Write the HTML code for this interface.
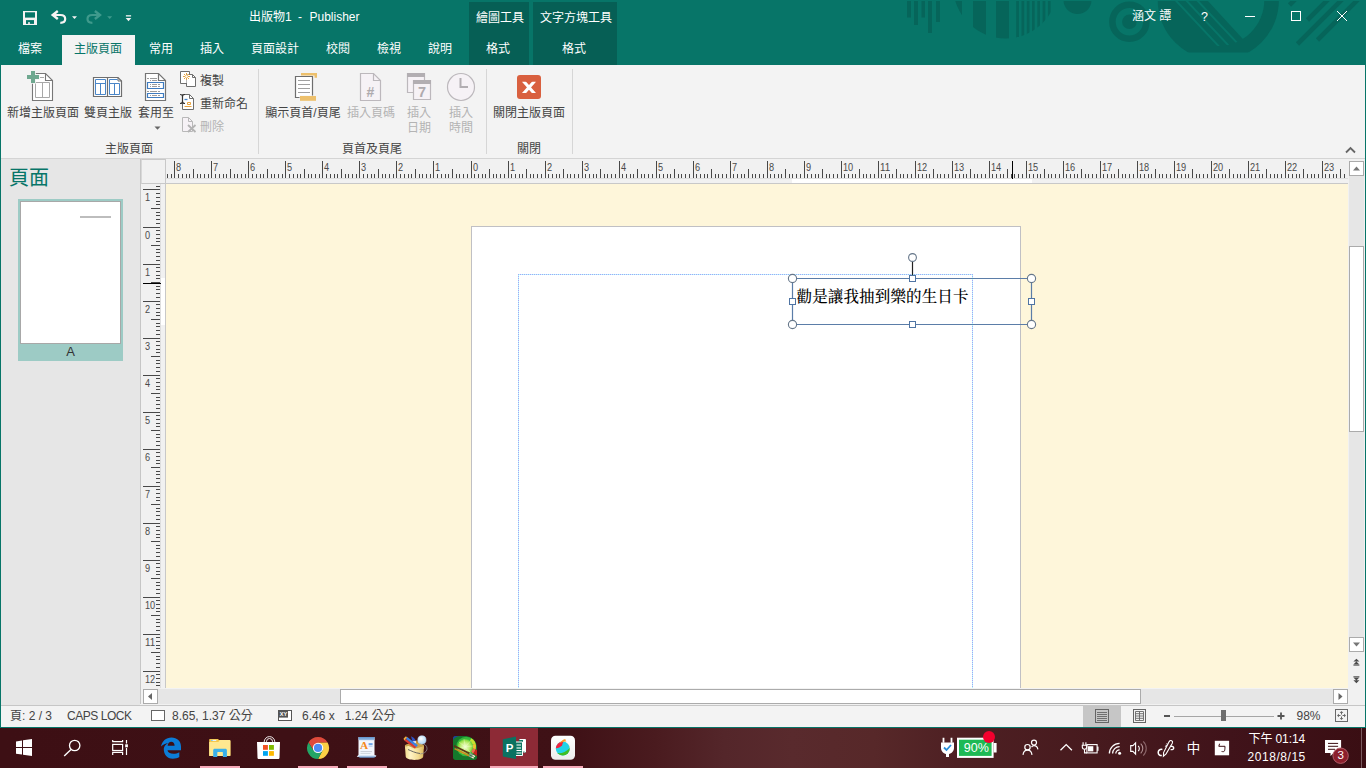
<!DOCTYPE html>
<html lang="zh-Hant">
<head>
<meta charset="utf-8">
<title>出版物1 - Publisher</title>
<style>
*{box-sizing:border-box;margin:0;padding:0}
html,body{width:1366px;height:768px;overflow:hidden;background:#f3f3f3}
body{font-family:"Liberation Sans","Noto Sans CJK TC",sans-serif;font-size:12px;color:#444;position:relative}
.abs{position:absolute}
.t{position:absolute;white-space:nowrap;line-height:16px;height:16px}
.c{transform:translateX(-50%)}
#titlebar{left:0;top:0;width:1366px;height:65px;background:#077568;overflow:hidden}
.w{color:#fff}
.tab{position:absolute;top:41px;height:16px;line-height:16px;color:#fff;font-size:12px;white-space:nowrap}
#ribbon{left:1px;top:65px;width:1364px;height:93px;background:#f3f3f3}
.lbl{position:absolute;white-space:nowrap;line-height:16px;height:16px;font-size:12px;color:#444;transform:translateX(-50%)}
.dis{color:#b4b4b4}
.sep{position:absolute;top:69px;width:1px;height:85px;background:#d6d6d6}
svg{position:absolute;overflow:visible}
</style>
</head>
<body>
<div id="titlebar" class="abs">
<svg width="1366" height="65" viewBox="0 0 1366 65" style="left:0;top:0">
 <g fill="#06655a">
  <rect x="907" y="0" width="4" height="17.5"/><rect x="914" y="0" width="4" height="25"/><rect x="921.5" y="0" width="3.5" height="17.5"/><rect x="928" y="0" width="4" height="33"/><rect x="936" y="0" width="4" height="22"/>
  <clipPath id="cpA"><circle cx="1005.5" cy="-14" r="52.4"/></clipPath>
  <g clip-path="url(#cpA)">
   <path d="M954 0h8v18z"/>
   <rect x="973" y="0" width="13" height="40"/><rect x="996" y="0" width="13" height="40"/>
   <rect x="1016.2" y="0" width="2.7" height="40"/><rect x="1021.5" y="0" width="2.7" height="40"/><rect x="1026.8" y="0" width="2.7" height="40"/><rect x="1032" y="0" width="2.7" height="40"/><rect x="1037.3" y="0" width="2.7" height="40"/><rect x="1042.6" y="0" width="2.7" height="40"/><rect x="1047.9" y="0" width="2.7" height="40"/>
  </g>
  <circle cx="1077.5" cy="0" r="14"/>
 </g>
 <circle cx="1129.4" cy="21.8" r="17" fill="none" stroke="#06655a" stroke-width="6.5"/>
 <circle cx="1129.4" cy="21.8" r="7.3" fill="#06655a"/>
 <clipPath id="cpB"><rect x="1150" y="0" width="140" height="52.500"/></clipPath>
 <g clip-path="url(#cpB)">
  <circle cx="1218.300" cy="0" r="60.600" fill="#06655a"/>
  <clipPath id="cpC"><circle cx="1218.300" cy="0" r="46"/></clipPath>
  <g clip-path="url(#cpC)">
   <path d="M1207 0L1253 50H1300V-10H1198z" fill="#077568"/>
   <path d="M1166 -10L1226 54M1176.500 -10L1236.500 54M1187.500 -10L1247.500 54" stroke="#077568" stroke-width="2" fill="none"/>
  </g>
 </g>
 <g stroke="#06655a" stroke-width="4.600" fill="none">
  <path d="M1289.500 5L1297.500 -3M1307.500 20L1330.500 -3M1297.500 44L1344.500 -3M1317.500 40L1361.500 -4"/>
 </g>
 <rect x="0" y="0" width="1366" height="1" fill="#077568"/>
</svg>
<div class="abs" style="left:469px;top:2px;width:60px;height:63px;background:#065f55"></div>
<div class="abs" style="left:533px;top:2px;width:84px;height:63px;background:#065f55"></div>
<div class="abs" style="left:62px;top:35px;width:73px;height:30px;background:#f3f3f3"></div>
<!-- quick access icons -->
<svg width="140" height="32" viewBox="0 0 140 32" style="left:0;top:0">
 <rect x="23" y="11" width="14" height="14" fill="#f6f3f3"/>
 <rect x="25" y="12.300" width="10" height="5.300" fill="#077568"/>
 <rect x="26" y="20.100" width="8" height="3.800" fill="#077568"/>
 <rect x="28.100" y="22.200" width="1.800" height="1.700" fill="#f6f3f3"/>
 <g fill="none" stroke="#f6f3f3" stroke-width="2.200">
  <path d="M53 15H60.500C64 15 65.200 17.200 65.200 19C65.200 21.500 63 22.800 60.300 22.800"/>
  <path d="M57.800 11L52.700 15L57.800 19" stroke-width="2.400"/>
 </g>
 <path d="M72 16.200h5l-2.500 2.900z" fill="#f6f3f3"/>
 <g fill="none" stroke="#3f9a8c" stroke-width="2.200">
  <path d="M99.700 15H92.200C88.700 15 87.500 17.200 87.500 19C87.500 21.500 89.700 22.800 92.400 22.800"/>
  <path d="M94.900 11L100 15L94.900 19" stroke-width="2.400"/>
 </g>
 <path d="M107.200 16.200h5l-2.500 2.900z" fill="#3f9a8c"/>
 <rect x="125.900" y="15.200" width="5.200" height="1.300" fill="#f6f3f3"/>
 <path d="M125.700 18.100h5.600l-2.800 3.100z" fill="#f6f3f3"/>
</svg>
<div class="t w" style="left:249px;top:9px">出版物1</div><div class="t w" style="left:298px;top:9px">-</div><div class="t w" style="left:309.500px;top:9px">Publisher</div>
<div class="t w c" style="left:500px;top:10px">繪圖工具</div>
<div class="t w c" style="left:576px;top:10px">文字方塊工具</div>
<div class="tab c" style="left:30px">檔案</div>
<div class="tab c" style="left:98px;color:#077568">主版頁面</div>
<div class="tab c" style="left:161px">常用</div>
<div class="tab c" style="left:212px">插入</div>
<div class="tab c" style="left:275px">頁面設計</div>
<div class="tab c" style="left:338px">校閱</div>
<div class="tab c" style="left:389px">檢視</div>
<div class="tab c" style="left:440px">說明</div>
<div class="tab c" style="left:498px">格式</div>
<div class="tab c" style="left:574px">格式</div>
<div class="t w" style="left:1132px;top:8px;font-size:12px">涵文 譚</div>
<div class="t w c" style="left:1204.500px;top:9px;font-size:12.500px">?</div>
<svg width="140" height="20" viewBox="0 0 140 20" style="left:1226px;top:6px">
 <g fill="none" stroke="#fff" stroke-width="1">
  <path d="M19 10.500h10"/>
  <rect x="65.500" y="5.500" width="9" height="9"/>
  <path d="M111 5l10 10M121 5l-10 10"/>
 </g>
</svg>
</div>
<div id="ribbon" class="abs"></div>
<div class="abs" style="left:1px;top:158px;width:1364px;height:1px;background:#d4d4d4"></div>
<!-- new master page icon -->
<svg width="30" height="34" viewBox="0 0 30 34" style="left:26px;top:69px">
 <path d="M6.500 4.500H19.500L26.500 11.500V31.500H6.500z" fill="#fff" stroke="#777" stroke-width="1.100"/>
 <path d="M19.500 4.500V11.500H26.500" fill="none" stroke="#777" stroke-width="1.100"/>
 <path d="M9.500 13.500h14v15h-14zM16.500 13.500v15" fill="none" stroke="#a8a8a8"/>
 <path d="M14 8.500h4" stroke="#a8a8a8"/>
 <path d="M5 2h4v4h4v4h-4v4h-4v-4h-4v-4h4z" fill="#6fa890" stroke="#f3f3f3" stroke-width="1.600" paint-order="stroke"/>
</svg>
<div class="lbl" style="left:43px;top:105px">新增主版頁面</div>
<!-- two page master icon -->
<svg width="32" height="24" viewBox="0 0 32 24" style="left:92px;top:75px">
 <path d="M1.500 2.500H15.500V21.500H1.500zM15.500 2.500H26L29.500 6V21.500H15.500z" fill="#fff" stroke="#6e6e6e" stroke-width="1.200"/>
 <path d="M26 2.500V6H29.500" fill="none" stroke="#6e6e6e"/>
 <path d="M3.500 4.500h10v15h-10zM3.500 8.500h10M8.500 8.500v11" fill="none" stroke="#4a86c8"/>
 <path d="M17.500 4.500h8M17.500 4.500v15h10v-11h-10M22.500 8.500v11" fill="none" stroke="#4a86c8"/>
</svg>
<div class="lbl" style="left:108px;top:105px">雙頁主版</div>
<!-- apply to icon -->
<svg width="24" height="30" viewBox="0 0 24 30" style="left:144px;top:72px">
 <path d="M1.500 1.500H14.500L21.500 8.500V28.500H1.500z" fill="#fff" stroke="#747474" stroke-width="1.200"/>
 <path d="M14.500 1.500V8.500H21.500" fill="none" stroke="#747474" stroke-width="1.200"/>
 <path d="M3 6.500h2M6 6.500h7M6 8.500h1M8 8.500h5M3 19.500h2M6 19.500h7M14 19.500h2" stroke="#9c9c9c"/>
 <path d="M3.500 10.500h16v6h-16zM3.500 21.500h16v4h-16z" fill="#fff" stroke="#3f7cc0" stroke-width="1.200"/>
 <path d="M6 12.500h1M8 12.500h5M14 12.500h2M6 14.500h1M8 14.500h5M14 14.500h2M6 23.500h1M8 23.500h5M14 23.500h2" stroke="#9c9c9c"/>
</svg>
<div class="lbl" style="left:156px;top:105px">套用至</div>
<svg width="8" height="5" viewBox="0 0 8 5" style="left:154px;top:126px"><path d="M0.500 0.500h6l-3 3.200z" fill="#666"/></svg>
<!-- copy -->
<svg width="18" height="18" viewBox="0 0 18 18" style="left:179px;top:70px">
 <path d="M7.500 13.500H1.500V1.500H10.500V5" fill="#fff" stroke="#6e6e6e"/>
 <path d="M7.500 4.500H13.500L16.500 7.500V16.500H7.500z" fill="#fff" stroke="#6e6e6e"/>
 <path d="M13.500 4.500V7.500H16.500" fill="none" stroke="#6e6e6e"/>
 <rect x="2" y="2" width="8" height="2.500" fill="#fff"/><rect x="2" y="2" width="5.500" height="11" fill="#fff"/>
 <g stroke="#e8a33d" stroke-width="1"><path d="M7.500 3v7M4 6.500h7M5 4l5 5M10 4l-5 5"/></g>
 <circle cx="7.500" cy="6.500" r="1.300" fill="#fff"/>
</svg>
<div class="t" style="left:200px;top:73px">複製</div>
<!-- rename -->
<svg width="18" height="18" viewBox="0 0 18 18" style="left:179px;top:93px">
 <path d="M3.500 1.500H10.500L14.500 5.500V16.500H3.500z" fill="#fff" stroke="#6e6e6e"/>
 <path d="M10.500 1.500V5.500H14.500" fill="none" stroke="#6e6e6e"/>
 <path d="M1 1.500c1.500 0 2.500 .5 2.500 2v5c0 1.500-1 2-2.500 2M6 1.500c-1.500 0-2.500 .5-2.500 2v5c0 1.500 1 2 2.500 2" fill="none" stroke="#333" stroke-width="1.200"/>
 <path d="M5.500 6.500h3" stroke="#4a86c8" stroke-width="1.300"/>
 <path d="M5.500 13.500h7M8.500 9.500h3v2h-3z" fill="none" stroke="#e8a33d"/>
</svg>
<div class="t" style="left:200px;top:96px">重新命名</div>
<!-- delete -->
<svg width="18" height="18" viewBox="0 0 18 18" style="left:180px;top:116px">
 <path d="M2.500 1.500H8.500L12.500 5.500V15.500H2.500z" fill="#f6f2f6" stroke="#b8b8b8"/>
 <path d="M8.500 1.500V5.500H12.500" fill="none" stroke="#b8b8b8"/>
 <path d="M8 9l7.500 7M15.500 9l-7.500 7" stroke="#b3b3b3" stroke-width="1.800"/>
</svg>
<div class="t dis" style="left:200px;top:119px">刪除</div>
<div class="lbl" style="left:129px;top:141px">主版頁面</div>
<div class="sep" style="left:258px"></div>
<!-- header footer -->
<svg width="26" height="30" viewBox="0 0 26 30" style="left:293px;top:72px">
 <path d="M8 1h16v4.700h-2.500V3.500H8z" fill="#edc06c"/>
 <path d="M2.500 4.500h17v21h-17z" fill="#fff" stroke="#6e6e6e" stroke-width="1.200"/>
 <path d="M5 8.500h12M5 12.500h12M5 16.500h12M5 20.500h12" stroke="#a0a0a0"/>
 <rect x="6.500" y="23.500" width="17" height="5.500" fill="#f3f3f3"/>
 <rect x="7" y="24" width="16" height="4.800" fill="#edc06c"/>
</svg>
<div class="lbl" style="left:303px;top:105px">顯示頁首/頁尾</div>
<!-- insert page number -->
<svg width="24" height="30" viewBox="0 0 24 30" style="left:359px;top:72px">
 <path d="M1.500 1.500H14.500L21.500 8.500V28.500H1.500z" fill="#f6f2f6" stroke="#bcb8bc" stroke-width="1.200"/>
 <path d="M14.500 1.500V8.500H21.500" fill="none" stroke="#bcb8bc" stroke-width="1.200"/>
 <text x="11.500" y="24.500" font-family="Liberation Sans,sans-serif" font-weight="bold" font-size="14" fill="#aeaaae" text-anchor="middle">#</text>
</svg>
<div class="lbl dis" style="left:371px;top:105px">插入頁碼</div>
<!-- insert date -->
<svg width="26" height="30" viewBox="0 0 26 30" style="left:406px;top:72px">
 <path d="M1.500 1.500h17v19h-17z" fill="#f6f2f6" stroke="#bcb8bc" stroke-width="1.200"/>
 <rect x="1" y="1" width="18" height="4" fill="#b2aeb2"/>
 <path d="M7.500 8.500h17v19h-17z" fill="#f6f2f6" stroke="#bcb8bc" stroke-width="1.200"/>
 <rect x="7" y="8" width="18" height="4" fill="#b2aeb2"/>
 <text x="16" y="24.500" font-family="Liberation Sans,sans-serif" font-weight="bold" font-size="14.500" fill="#aeaaae" text-anchor="middle">7</text>
</svg>
<div class="lbl dis" style="left:419px;top:105px">插入</div>
<div class="lbl dis" style="left:419px;top:120px">日期</div>
<!-- insert time -->
<svg width="30" height="30" viewBox="0 0 30 30" style="left:446px;top:72px">
 <circle cx="15" cy="15" r="13.500" fill="#f6f2f6" stroke="#bcb8bc" stroke-width="1.200"/>
 <path d="M14.500 6v9h7.500" fill="none" stroke="#b2aeb2" stroke-width="2"/>
</svg>
<div class="lbl dis" style="left:461px;top:105px">插入</div>
<div class="lbl dis" style="left:461px;top:120px">時間</div>
<div class="lbl" style="left:372px;top:141px">頁首及頁尾</div>
<div class="sep" style="left:486px"></div>
<!-- close master -->
<svg width="26" height="26" viewBox="0 0 26 26" style="left:516px;top:74px">
 <rect x="1" y="1" width="24" height="24" rx="3" fill="#d9603f"/>
 <clipPath id="cx"><rect x="4" y="7.700" width="18" height="11.400"/></clipPath>
 <path d="M7.100 6.700l11.800 13.400M18.900 6.700l-11.800 13.400" stroke="#fff" stroke-width="3.100" clip-path="url(#cx)"/>
</svg>
<div class="lbl" style="left:529px;top:105px">關閉主版頁面</div>
<div class="lbl" style="left:529px;top:141px">關閉</div>
<div class="sep" style="left:572px"></div>
<svg width="12" height="8" viewBox="0 0 12 8" style="left:1345px;top:146px"><path d="M1 6.500l4.500-4.500 4.500 4.500" fill="none" stroke="#666" stroke-width="1.800"/></svg>
<!-- left pane -->
<div class="abs" style="left:1px;top:159px;width:139px;height:546px;background:#e6e6e6"></div>
<div class="t" style="left:9px;top:165px;height:26px;line-height:26px;font-size:20px;color:#077568">頁面</div>
<div class="abs" style="left:18px;top:199px;width:105px;height:162px;background:#9dcbc5"></div>
<div class="abs" style="left:20px;top:201px;width:101px;height:143px;background:#fff;border:1px solid #a8a8a8"></div>
<div class="abs" style="left:80px;top:216px;width:31px;height:2px;background:#bdbdbd"></div>
<div class="t c" style="left:70.500px;top:344px;font-size:13px;color:#333">A</div>
<!-- ruler frame -->
<div class="abs" style="left:141px;top:159px;width:1207px;height:25px;background:#f1f1f1"></div>
<div class="abs" style="left:141px;top:184px;width:25px;height:505px;background:#f1f1f1"></div>
<div class="abs" style="left:140px;top:159px;width:1px;height:545px;background:#c6c6c6"></div>
<div class="abs" style="left:141px;top:159px;width:25px;height:25px;border:1px solid #c8c8c8;border-left-color:#d8d8d8"></div>
<div class="abs" style="left:166px;top:178px;width:1182px;height:1px;background:#dedede"></div>
<div class="abs" style="left:166px;top:183px;width:1182px;height:1px;background:#c8c8c8"></div>
<div class="abs" style="left:160px;top:184px;width:1px;height:504px;background:#dedede"></div>
<div class="abs" style="left:165px;top:184px;width:1px;height:504px;background:#c8c8c8"></div>
<div class="abs" style="left:792px;top:179px;width:240px;height:4px;background:#fff"></div>
<div class="abs" style="left:161px;top:278px;width:4px;height:47px;background:#fff"></div>
<!-- rulers -->
<svg width="1366" height="768" viewBox="0 0 1366 768" style="left:0;top:0">
<path d="M167.5 174V178M171.5 174V178M174.5 161V178M178.5 174V178M182.5 174V178M186.5 174V178M189.5 174V178M193.5 169V178M197.5 174V178M200.5 174V178M204.5 174V178M208.5 174V178M211.5 161V178M215.5 174V178M219.5 174V178M223.5 174V178M226.5 174V178M230.5 169V178M234.5 174V178M237.5 174V178M241.5 174V178M245.5 174V178M248.5 161V178M252.5 174V178M256.5 174V178M260.5 174V178M263.5 174V178M267.5 169V178M271.5 174V178M274.5 174V178M278.5 174V178M282.5 174V178M285.5 161V178M289.5 174V178M293.5 174V178M297.5 174V178M300.5 174V178M304.5 169V178M308.5 174V178M311.5 174V178M315.5 174V178M319.5 174V178M322.5 161V178M326.5 174V178M330.5 174V178M334.5 174V178M337.5 174V178M341.5 169V178M345.5 174V178M348.5 174V178M352.5 174V178M356.5 174V178M359.5 161V178M363.5 174V178M367.5 174V178M371.5 174V178M374.5 174V178M378.5 169V178M382.5 174V178M385.5 174V178M389.5 174V178M393.5 174V178M396.5 161V178M400.5 174V178M404.5 174V178M408.5 174V178M411.5 174V178M415.5 169V178M419.5 174V178M422.5 174V178M426.5 174V178M430.5 174V178M433.5 161V178M437.5 174V178M441.5 174V178M445.5 174V178M448.5 174V178M452.5 169V178M456.5 174V178M459.5 174V178M463.5 174V178M467.5 174V178M471.5 161V178M474.5 174V178M478.5 174V178M482.5 174V178M485.5 174V178M489.5 169V178M493.5 174V178M496.5 174V178M500.5 174V178M504.5 174V178M508.5 161V178M511.5 174V178M515.5 174V178M519.5 174V178M522.5 174V178M526.5 169V178M530.5 174V178M533.5 174V178M537.5 174V178M541.5 174V178M545.5 161V178M548.5 174V178M552.5 174V178M556.5 174V178M559.5 174V178M563.5 169V178M567.5 174V178M570.5 174V178M574.5 174V178M578.5 174V178M582.5 161V178M585.5 174V178M589.5 174V178M593.5 174V178M596.5 174V178M600.5 169V178M604.5 174V178M607.5 174V178M611.5 174V178M615.5 174V178M619.5 161V178M622.5 174V178M626.5 174V178M630.5 174V178M633.5 174V178M637.5 169V178M641.5 174V178M644.5 174V178M648.5 174V178M652.5 174V178M656.5 161V178M659.5 174V178M663.5 174V178M667.5 174V178M670.5 174V178M674.5 169V178M678.5 174V178M681.5 174V178M685.5 174V178M689.5 174V178M693.5 161V178M696.5 174V178M700.5 174V178M704.5 174V178M707.5 174V178M711.5 169V178M715.5 174V178M718.5 174V178M722.5 174V178M726.5 174V178M730.5 161V178M733.5 174V178M737.5 174V178M741.5 174V178M744.5 174V178M748.5 169V178M752.5 174V178M755.5 174V178M759.5 174V178M763.5 174V178M767.5 161V178M770.5 174V178M774.5 174V178M778.5 174V178M781.5 174V178M785.5 169V178M789.5 174V178M792.5 174V178M796.5 174V178M800.5 174V178M804.5 161V178M807.5 174V178M811.5 174V178M815.5 174V178M818.5 174V178M822.5 169V178M826.5 174V178M829.5 174V178M833.5 174V178M837.5 174V178M841.5 161V178M844.5 174V178M848.5 174V178M852.5 174V178M855.5 174V178M859.5 169V178M863.5 174V178M866.5 174V178M870.5 174V178M874.5 174V178M878.5 161V178M881.5 174V178M885.5 174V178M889.5 174V178M892.5 174V178M896.5 169V178M900.5 174V178M903.5 174V178M907.5 174V178M911.5 174V178M915.5 161V178M918.5 174V178M922.5 174V178M926.5 174V178M929.5 174V178M933.5 169V178M937.5 174V178M940.5 174V178M944.5 174V178M948.5 174V178M952.5 161V178M955.5 174V178M959.5 174V178M963.5 174V178M966.5 174V178M970.5 169V178M974.5 174V178M977.5 174V178M981.5 174V178M985.5 174V178M989.5 161V178M992.5 174V178M996.5 174V178M1000.5 174V178M1003.5 174V178M1007.5 169V178M1011.5 174V178M1014.5 174V178M1018.5 174V178M1022.5 174V178M1026.5 161V178M1029.5 174V178M1033.5 174V178M1037.5 174V178M1040.5 174V178M1044.5 169V178M1048.5 174V178M1051.5 174V178M1055.5 174V178M1059.5 174V178M1063.5 161V178M1066.5 174V178M1070.5 174V178M1074.5 174V178M1077.5 174V178M1081.5 169V178M1085.5 174V178M1088.5 174V178M1092.5 174V178M1096.5 174V178M1100.5 161V178M1103.5 174V178M1107.5 174V178M1111.5 174V178M1114.5 174V178M1118.5 169V178M1122.5 174V178M1125.5 174V178M1129.5 174V178M1133.5 174V178M1137.5 161V178M1140.5 174V178M1144.5 174V178M1148.5 174V178M1151.5 174V178M1155.5 169V178M1159.5 174V178M1162.5 174V178M1166.5 174V178M1170.5 174V178M1174.5 161V178M1177.5 174V178M1181.5 174V178M1185.5 174V178M1188.5 174V178M1192.5 169V178M1196.5 174V178M1199.5 174V178M1203.5 174V178M1207.5 174V178M1211.5 161V178M1214.5 174V178M1218.5 174V178M1222.5 174V178M1225.5 174V178M1229.5 169V178M1233.5 174V178M1237.5 174V178M1240.5 174V178M1244.5 174V178M1248.5 161V178M1251.5 174V178M1255.5 174V178M1259.5 174V178M1262.5 174V178M1266.5 169V178M1270.5 174V178M1274.5 174V178M1277.5 174V178M1281.5 174V178M1285.5 161V178M1288.5 174V178M1292.5 174V178M1296.5 174V178M1299.5 174V178M1303.5 169V178M1307.5 174V178M1311.5 174V178M1314.5 174V178M1318.5 174V178M1322.5 161V178M1325.5 174V178M1329.5 174V178M1333.5 174V178M1336.5 174V178M1340.5 169V178M1344.5 174V178" stroke="#484848" stroke-width="1" fill="none"/>
<g font-family="Liberation Sans,sans-serif" font-size="10" fill="#4a4a4a">
<text x="176" y="171" textLength="5.1" lengthAdjust="spacingAndGlyphs">8</text>
<text x="213" y="171" textLength="5.1" lengthAdjust="spacingAndGlyphs">7</text>
<text x="250" y="171" textLength="5.1" lengthAdjust="spacingAndGlyphs">6</text>
<text x="287" y="171" textLength="5.1" lengthAdjust="spacingAndGlyphs">5</text>
<text x="324" y="171" textLength="5.1" lengthAdjust="spacingAndGlyphs">4</text>
<text x="361" y="171" textLength="5.1" lengthAdjust="spacingAndGlyphs">3</text>
<text x="398" y="171" textLength="5.1" lengthAdjust="spacingAndGlyphs">2</text>
<text x="435" y="171" textLength="5.1" lengthAdjust="spacingAndGlyphs">1</text>
<text x="473" y="171" textLength="5.1" lengthAdjust="spacingAndGlyphs">0</text>
<text x="510" y="171" textLength="5.1" lengthAdjust="spacingAndGlyphs">1</text>
<text x="547" y="171" textLength="5.1" lengthAdjust="spacingAndGlyphs">2</text>
<text x="584" y="171" textLength="5.1" lengthAdjust="spacingAndGlyphs">3</text>
<text x="621" y="171" textLength="5.1" lengthAdjust="spacingAndGlyphs">4</text>
<text x="658" y="171" textLength="5.1" lengthAdjust="spacingAndGlyphs">5</text>
<text x="695" y="171" textLength="5.1" lengthAdjust="spacingAndGlyphs">6</text>
<text x="732" y="171" textLength="5.1" lengthAdjust="spacingAndGlyphs">7</text>
<text x="769" y="171" textLength="5.1" lengthAdjust="spacingAndGlyphs">8</text>
<text x="806" y="171" textLength="5.1" lengthAdjust="spacingAndGlyphs">9</text>
<text x="843" y="171" textLength="10.2" lengthAdjust="spacingAndGlyphs">10</text>
<text x="880" y="171" textLength="10.2" lengthAdjust="spacingAndGlyphs">11</text>
<text x="917" y="171" textLength="10.2" lengthAdjust="spacingAndGlyphs">12</text>
<text x="954" y="171" textLength="10.2" lengthAdjust="spacingAndGlyphs">13</text>
<text x="991" y="171" textLength="10.2" lengthAdjust="spacingAndGlyphs">14</text>
<text x="1028" y="171" textLength="10.2" lengthAdjust="spacingAndGlyphs">15</text>
<text x="1065" y="171" textLength="10.2" lengthAdjust="spacingAndGlyphs">16</text>
<text x="1102" y="171" textLength="10.2" lengthAdjust="spacingAndGlyphs">17</text>
<text x="1139" y="171" textLength="10.2" lengthAdjust="spacingAndGlyphs">18</text>
<text x="1176" y="171" textLength="10.2" lengthAdjust="spacingAndGlyphs">19</text>
<text x="1213" y="171" textLength="10.2" lengthAdjust="spacingAndGlyphs">20</text>
<text x="1250" y="171" textLength="10.2" lengthAdjust="spacingAndGlyphs">21</text>
<text x="1287" y="171" textLength="10.2" lengthAdjust="spacingAndGlyphs">22</text>
<text x="1324" y="171" textLength="10.2" lengthAdjust="spacingAndGlyphs">23</text>
</g>
<path d="M156 186.5H160M143 189.5H160M156 193.5H160M156 197.5H160M156 201.5H160M156 204.5H160M151 208.5H160M156 212.5H160M156 215.5H160M156 219.5H160M156 223.5H160M143 227.5H160M156 230.5H160M156 234.5H160M156 238.5H160M156 241.5H160M151 245.5H160M156 249.5H160M156 252.5H160M156 256.5H160M156 260.5H160M143 264.5H160M156 267.5H160M156 271.5H160M156 275.5H160M156 278.5H160M151 282.5H160M156 286.5H160M156 289.5H160M156 293.5H160M156 297.5H160M143 301.5H160M156 304.5H160M156 308.5H160M156 312.5H160M156 315.5H160M151 319.5H160M156 323.5H160M156 326.5H160M156 330.5H160M156 334.5H160M143 338.5H160M156 341.5H160M156 345.5H160M156 349.5H160M156 352.5H160M151 356.5H160M156 360.5H160M156 363.5H160M156 367.5H160M156 371.5H160M143 375.5H160M156 378.5H160M156 382.5H160M156 386.5H160M156 389.5H160M151 393.5H160M156 397.5H160M156 400.5H160M156 404.5H160M156 408.5H160M143 412.5H160M156 415.5H160M156 419.5H160M156 423.5H160M156 426.5H160M151 430.5H160M156 434.5H160M156 437.5H160M156 441.5H160M156 445.5H160M143 449.5H160M156 452.5H160M156 456.5H160M156 460.5H160M156 463.5H160M151 467.5H160M156 471.5H160M156 474.5H160M156 478.5H160M156 482.5H160M143 486.5H160M156 489.5H160M156 493.5H160M156 497.5H160M156 500.5H160M151 504.5H160M156 508.5H160M156 511.5H160M156 515.5H160M156 519.5H160M143 523.5H160M156 526.5H160M156 530.5H160M156 534.5H160M156 537.5H160M151 541.5H160M156 545.5H160M156 548.5H160M156 552.5H160M156 556.5H160M143 560.5H160M156 563.5H160M156 567.5H160M156 571.5H160M156 574.5H160M151 578.5H160M156 582.5H160M156 585.5H160M156 589.5H160M156 593.5H160M143 597.5H160M156 600.5H160M156 604.5H160M156 608.5H160M156 611.5H160M151 615.5H160M156 619.5H160M156 622.5H160M156 626.5H160M156 630.5H160M143 634.5H160M156 637.5H160M156 641.5H160M156 645.5H160M156 648.5H160M151 652.5H160M156 656.5H160M156 659.5H160M156 663.5H160M156 667.5H160M143 671.5H160M156 674.5H160M156 678.5H160M156 682.5H160M156 685.5H160" stroke="#484848" stroke-width="1" fill="none"/>
<g font-family="Liberation Sans,sans-serif" font-size="10" fill="#4a4a4a">
<text x="145" y="201" textLength="5.1" lengthAdjust="spacingAndGlyphs">1</text>
<text x="145" y="239" textLength="5.1" lengthAdjust="spacingAndGlyphs">0</text>
<text x="145" y="276" textLength="5.1" lengthAdjust="spacingAndGlyphs">1</text>
<text x="145" y="313" textLength="5.1" lengthAdjust="spacingAndGlyphs">2</text>
<text x="145" y="350" textLength="5.1" lengthAdjust="spacingAndGlyphs">3</text>
<text x="145" y="387" textLength="5.1" lengthAdjust="spacingAndGlyphs">4</text>
<text x="145" y="424" textLength="5.1" lengthAdjust="spacingAndGlyphs">5</text>
<text x="145" y="461" textLength="5.1" lengthAdjust="spacingAndGlyphs">6</text>
<text x="145" y="498" textLength="5.1" lengthAdjust="spacingAndGlyphs">7</text>
<text x="145" y="535" textLength="5.1" lengthAdjust="spacingAndGlyphs">8</text>
<text x="145" y="572" textLength="5.1" lengthAdjust="spacingAndGlyphs">9</text>
<text x="145" y="609" textLength="10.2" lengthAdjust="spacingAndGlyphs">10</text>
<text x="145" y="646" textLength="10.2" lengthAdjust="spacingAndGlyphs">11</text>
<text x="145" y="683" textLength="10.2" lengthAdjust="spacingAndGlyphs">12</text>
</g>
<path d="M1012.500 161V179" stroke="#000" stroke-width="1"/>
<path d="M143 283.500H161" stroke="#000" stroke-width="1"/>
</svg>
<!-- canvas -->
<div class="abs" style="left:166px;top:184px;width:1182px;height:504px;background:#fef6da;overflow:hidden">
 <div class="abs" style="left:305px;top:42px;width:550px;height:470px;background:#fff;border:1px solid #c0c0c4"></div>
</div>
<svg width="1366" height="768" viewBox="0 0 1366 768" style="left:0;top:0;pointer-events:none">
 <g fill="none" stroke-width="1" shape-rendering="crispEdges">
  <path d="M518.500 688V274.500H972.500V688" stroke="#b4ffff"/>
  <path d="M518.500 274V688M972.500 274V688M518 274.500H973" stroke="#a9a1f6" stroke-dasharray="1 1"/>
 </g>
 <g fill="none" stroke="#5b7da8" stroke-width="1.200">
  <path d="M792.500 278.500H1031.500V324.500H792.500z"/>
 </g>
 <path d="M912.500 262V278" stroke="#222" stroke-width="1.200"/>
 <g fill="#fff" stroke="#66778a" stroke-width="1.100">
  <circle cx="912.500" cy="257.500" r="3.900"/>
  <circle cx="792.500" cy="278.500" r="4.100"/><circle cx="1031.500" cy="278.500" r="4.100"/>
  <circle cx="792.500" cy="324.500" r="4.100"/><circle cx="1031.500" cy="324.500" r="4.100"/>
 </g>
 <g fill="#fff" stroke="#4f74a3" stroke-width="1">
  <rect x="909.500" y="275.500" width="6" height="6"/><rect x="909.500" y="321.500" width="6" height="6"/>
  <rect x="789.500" y="298.500" width="6" height="6"/><rect x="1028.500" y="298.500" width="6" height="6"/>
 </g>
</svg>
<div class="t" style="left:796.500px;top:285px;height:24px;line-height:24px;font-weight:500;font-family:'Liberation Serif','Noto Serif CJK TC','Noto Serif CJK SC',serif;font-size:15.500px;color:#000;letter-spacing:0.150px">勸是讓我抽到樂的生日卡</div>
<!-- vertical scrollbar -->
<div class="abs" style="left:1348px;top:159px;width:17px;height:530px;background:#f1f1f1"></div>
<div class="abs" style="left:1349px;top:176px;width:15px;height:461px;background:#e6e6e6"></div>
<div class="abs" style="left:1349px;top:161px;width:15px;height:15px;background:#fff;border:1px solid #ababab"></div>
<div class="abs" style="left:1349px;top:246px;width:15px;height:186px;background:#fff;border:1px solid #ababab"></div>
<div class="abs" style="left:1349px;top:637px;width:15px;height:15px;background:#fff;border:1px solid #ababab"></div>
<svg width="15" height="530" viewBox="0 0 15 530" style="left:1349px;top:159px">
 <path d="M4 11.500h7l-3.500-4z" fill="#777"/>
 <path d="M4 483.500h7l-3.500 4z" fill="#777"/>
 <g fill="#4a4a4a"><path d="M4.400 502.600h6l-3-2.900zM4.400 505.400h6l-3-2.900z"/><rect x="4.400" y="505.700" width="6" height=".9"/>
 <path d="M4.400 518.500h6l-3 2.900zM4.400 521.300h6l-3 2.900z"/><rect x="4.400" y="517.300" width="6" height=".9"/></g>
</svg>
<!-- horizontal scrollbar -->
<div class="abs" style="left:141px;top:689px;width:1224px;height:16px;background:#f1f1f1"></div>
<div class="abs" style="left:143px;top:689px;width:1205px;height:15px;background:#e6e6e6"></div>
<div class="abs" style="left:143px;top:689px;width:15px;height:15px;background:#fff;border:1px solid #ababab"></div>
<div class="abs" style="left:1333px;top:689px;width:15px;height:15px;background:#fff;border:1px solid #ababab"></div>
<div class="abs" style="left:340px;top:689px;width:801px;height:15px;background:#fff;border:1px solid #ababab"></div>
<svg width="1210" height="15" viewBox="0 0 1210 15" style="left:143px;top:689px">
 <path d="M9 4v7l-4-3.500z" fill="#666"/><path d="M1195.500 4v7l4-3.500z" fill="#666"/>
</svg>
<!-- status bar -->
<div class="abs" style="left:1px;top:705px;width:1364px;height:1px;background:#c6c6c6"></div>
<div class="abs" style="left:1px;top:706px;width:1364px;height:21px;background:#f3f3f3"></div>
<div class="abs" style="left:1083px;top:706px;width:38px;height:21px;background:#c6c6c6"></div>
<div class="t" id="st1" style="left:10px;top:708px">頁: 2 / 3</div>
<div class="t" id="st2" style="left:67px;top:708px;letter-spacing:-0.450px">CAPS LOCK</div>
<div class="t" id="st3" style="left:172px;top:708px">8.65, 1.37 公分</div>
<div class="t" id="st4" style="left:302px;top:708px">6.46 x&nbsp;&nbsp; 1.24 公分</div>
<div class="t" id="st5" style="left:1296.500px;top:708px">98%</div>
<svg width="1366" height="22" viewBox="0 0 1366 22" style="left:0;top:706px">
 <rect x="151.500" y="4.500" width="13" height="10" fill="#fff" stroke="#666"/>
 <rect x="278.500" y="4.500" width="13" height="10" fill="#fff" stroke="#555"/>
 <rect x="279" y="5" width="9" height="6.600" fill="#555"/>
 <text x="283.500" y="10.200" font-family="Liberation Sans,sans-serif" font-weight="bold" font-size="5.600" fill="#fff" text-anchor="middle">XY</text>
 <g fill="none" stroke="#666"><rect x="1095.500" y="3.500" width="13" height="13"/><path d="M1097 6.500h10M1097 8.500h10M1097 10.500h10M1097 12.500h10M1097 14.500h10" stroke-width=".9"/></g>
 <g fill="none" stroke="#666"><rect x="1133.500" y="3.500" width="12" height="13"/><path d="M1135.500 5.500h8v9h-8zM1135.500 7.700h8M1135.500 10h8M1135.500 12.300h8M1139.500 5.500v9" stroke-width=".9"/></g>
 <rect x="1164" y="9" width="6" height="2" fill="#555"/>
 <rect x="1174" y="10" width="100" height="1" fill="#a6a6a6"/>
 <rect x="1221" y="4" width="5" height="11" fill="#6e6e6e"/>
 <path d="M1277.500 10h7M1281 6.500v7" stroke="#555" stroke-width="1.800"/>
 <g fill="none" stroke="#6a6a6a"><rect x="1335.500" y="3.500" width="12" height="12"/></g>
 <g fill="#666"><path d="M1341.500 5l1.800 2h-3.600zM1341.500 14l1.800-2h-3.600zM1337 9.500l2-1.800v3.600zM1346 9.500l-2-1.800v3.600z"/><rect x="1341" y="6" width="1" height="2.500"/><rect x="1341" y="10.500" width="1" height="2.500"/><rect x="1338" y="9" width="2.500" height="1"/><rect x="1342.500" y="9" width="2.500" height="1"/></g>
</svg>
<!-- window border -->
<div class="abs" style="left:0;top:0;width:1px;height:728px;background:#077568"></div>
<div class="abs" style="left:1365px;top:0;width:1px;height:728px;background:#077568"></div>
<div class="abs" style="left:0;top:727px;width:1366px;height:1px;background:#077568"></div>
<!-- taskbar -->
<div class="abs" style="left:0;top:728px;width:1366px;height:40px;background:linear-gradient(90deg,#3d0f14 0%,#3f1116 42%,#4a1b1f 48%,#54262a 53%,#592a2d 58%,#572829 64%,#4e2023 70%,#471a1e 80%,#40131a 90%,#3a0e13 100%)"></div>
<div class="abs" style="left:490px;top:728px;width:48px;height:40px;background:#8d2a36"></div>
<div class="abs" style="left:200px;top:766px;width:40px;height:2px;background:#f5a9b8"></div>
<div class="abs" style="left:298px;top:766px;width:40px;height:2px;background:#f5a9b8"></div>
<div class="abs" style="left:347px;top:766px;width:40px;height:2px;background:#f5a9b8"></div>
<div class="abs" style="left:490px;top:766px;width:48px;height:2px;background:#f5a9b8"></div>
<div class="abs" style="left:543px;top:766px;width:40px;height:2px;background:#f5a9b8"></div>
<svg width="1366" height="40" viewBox="0 0 1366 40" style="left:0;top:728px">
 <!-- windows -->
 <path d="M16 13.400L22 12.500V19H16zM23 12.350L32 11V19H23zM16 20H22V26.600L16 25.700zM23 20H32V28.100L23 26.750z" fill="#fff"/>
 <!-- search -->
 <circle cx="74.700" cy="17.500" r="5.200" fill="none" stroke="#fff" stroke-width="1.300"/>
 <path d="M71 21.500L64.200 27.900" stroke="#fff" stroke-width="1.400"/>
 <!-- task view -->
 <g fill="none" stroke="#fff" stroke-width="1.200"><rect x="112.700" y="16.400" width="9.900" height="6.100"/><path d="M112.700 12v1.700h9.900V12M112.700 27v-2.600h9.900V27M126.500 12v3.500M126.500 20v7"/></g>
 <rect x="125.200" y="16.300" width="2.700" height="3" fill="#fff"/>
 <!-- edge -->
 <path d="M181 22.3L181 18.5C181 13 177 9.4 171.5 9.4C166 9.4 161.8 13.2 161 18.6C162.8 16.6 165.5 15.2 168.3 14.9C166 16 164.2 18 163.8 20.5C163.5 26 167 30.7 172.8 30.7C175.5 30.7 177.8 30 179.3 29L179.3 24.2C177.5 25.3 175.5 25.8 173.5 25.8C170 25.8 167.8 24.4 167.5 22.3ZM167.6 17.8C168 15.2 169.4 13.8 171.2 13.8C173.2 13.8 174.5 15.3 174.6 17.8Z" fill="#0c7cd7" fill-rule="evenodd"/>
 <!-- folder -->
 <path d="M209.200 11.600c0-.4.300-.700.700-.700h8.200l1 1.300h10.600c.4 0 .7.300.7.700v14.500c0 .3-.2.500-.5.500H209.700c-.3 0-.5-.2-.5-.5z" fill="#f5c84c"/>
 <path d="M209.200 14h9.300l.9-1.900h10.300c.4 0 .7.300.7.700v14.600c0 .3-.2.500-.5.500H209.700c-.3 0-.5-.2-.5-.5z" fill="#ffe890"/>
 <rect x="211.300" y="11.900" width="5" height="1.100" fill="#e8f4fb"/><rect x="211.300" y="11.900" width="1.200" height="1.100" fill="#58b8e8"/>
 <path d="M213.200 28.900v-6.600c0-.8.600-1.500 1.500-1.500h10.700c.9 0 1.500.7 1.500 1.500v6.600h-4v-4.300c0-.4-.2-.6-.6-.6h-4.400c-.4 0-.6.200-.6.600v4.300z" fill="#3ab0ea"/>
 <!-- store -->
 <path d="M264.200 14.500v-.6a5.300 5.300 0 0 1 10.600 0v.6" fill="none" stroke="#fff" stroke-width=".9"/>
 <path d="M266.500 14.500v-1a3 3 0 0 1 6 0v1" fill="none" stroke="#fff" stroke-width=".9"/>
 <path d="M257 13.900h23l-.5 15.800c0 .8-.6 1.300-1.300 1.300h-19.400c-.7 0-1.300-.5-1.300-1.300z" fill="#fff"/>
 <rect x="263" y="17" width="4.900" height="4.800" fill="#f25022"/><rect x="269" y="17" width="4.900" height="4.800" fill="#7fba00"/><rect x="263" y="23.100" width="4.900" height="4.700" fill="#00a4ef"/><rect x="269" y="23.100" width="4.900" height="4.700" fill="#ffb900"/>
 <!-- chrome -->
 <path d="M308.52 14.40A11.00 11.00 0 0 1 327.58 14.40L318.05 14.70L318.05 19.90L313.55 22.50z" fill="#de4a3b"/>
 <path d="M327.58 14.40A11.00 11.00 0 0 1 318.05 30.90L322.55 22.50L318.05 19.90L318.05 14.70z" fill="#fcd045"/>
 <path d="M318.05 30.90A11.00 11.00 0 0 1 308.52 14.40L313.55 22.50L318.05 19.90L322.55 22.50z" fill="#23a566"/>
 <circle cx="318.05" cy="19.90" r="5.20" fill="#fff"/><circle cx="318.05" cy="19.90" r="4.1" fill="#4c8bf5"/>
 <!-- doc -->
 <defs><linearGradient id="dcg" x1="0" y1="0" x2="0" y2="1"><stop offset="0" stop-color="#e2ecf8"/><stop offset="1" stop-color="#5a8cc6"/></linearGradient>
 <linearGradient id="dtg" x1="0" y1="0" x2="0" y2="1"><stop offset="0" stop-color="#5f92cc"/><stop offset="1" stop-color="#9cc0e6"/></linearGradient></defs>
 <path d="M358.500 9h16v17.500c0 .8 1 1.800 1.800 2.500h-19.600c.8-.7 1.800-1.700 1.800-2.500z" fill="#f3f7fd"/>
 <rect x="358.500" y="9" width="16" height="3.200" fill="url(#dtg)"/>
 <text x="364.200" y="21.300" font-family="Liberation Serif,serif" font-weight="bold" font-size="11.300" fill="#f58a1e" text-anchor="middle">A</text>
 <rect x="368.600" y="15.300" width="4" height="1.500" fill="#4d90e2"/><rect x="368.600" y="17.600" width="4" height="1" fill="#a8c6ee"/>
 <rect x="360.500" y="23.200" width="11.500" height=".9" fill="#c2c8d2"/><rect x="360.500" y="25" width="10" height=".9" fill="#d0d6de"/>
 <path d="M357.600 27.200h18.800c-.6 1.400-1.500 2.300-2.600 2.600h-13.600c-1.100-.3-2-1.200-2.600-2.600z" fill="url(#dcg)"/>
 <!-- paint bucket -->
 <defs><linearGradient id="bkg" x1="0" y1="0" x2="1" y2="0"><stop offset="0" stop-color="#f0d98c"/><stop offset=".3" stop-color="#fff3c4"/><stop offset=".7" stop-color="#f3dc92"/><stop offset="1" stop-color="#d9b45c"/></linearGradient>
 <radialGradient id="mgg" cx=".4" cy=".35" r=".7"><stop offset="0" stop-color="#fff"/><stop offset="1" stop-color="#a9d4f7"/></radialGradient>
 <radialGradient id="lmg" cx=".5" cy=".5" r=".5"><stop offset="0" stop-color="#f4ffd8"/><stop offset=".55" stop-color="#c4ee7c"/><stop offset=".8" stop-color="#9be24a"/><stop offset="1" stop-color="#52c83c"/></radialGradient></defs>
 <path d="M413.500 17.500l1.500-5 2.500 0 1 5z" fill="#c98a2a"/>
 <path d="M416 19l2.500-7 1.800.5-1.800 7z" fill="#e0a030"/>
 <path d="M411 8.200l2.300 1.300c1.300 1 2.200 2.300 2.500 3.800l-3.300.2c-.5-1.800-1-3.500-1.500-5.300z" fill="#2d4fc0"/>
 <path d="M412.500 13.300l3.300-.3.500 2.500-3 .8z" fill="#dfe8f8"/>
 <path d="M404.900 17.700C404.900 15.600 424 15.600 424 17.700L423.200 28.500C423 33 406 33 405.700 28.500z" fill="url(#bkg)"/>
 <ellipse cx="414.500" cy="17.800" rx="9.500" ry="2.600" fill="#c9a24c"/>
 <path d="M404.300 12.400l1.500-1.700 10.500 8-1.500 1.800z" fill="#d93a32"/>
 <path d="M405.800 10.700l1.500-1.600 10.500 8.100-1.500 1.700z" fill="#3b7fe0"/>
 <path d="M404.300 12.400l3-3.300-1.800-.6-2 2.200z" fill="#f0b040"/>
 <path d="M405 20.500C405 18.500 408 17.700 409 18.300l6 2.500 8.700-2.600c.2 1 .3 1.700.2 2.500z" fill="url(#bkg)"/>
 <path d="M408 21.500c3.500 1.500 7.500 3.500 12 4" fill="none" stroke="#5a5a5a" stroke-width=".9"/>
 <path d="M423.800 16c2.500 1 3.800 3.500 3 6-.6 2-3 3.500-6.500 4" fill="none" stroke="#8a8a90" stroke-width=".8"/>
 <circle cx="421.900" cy="11.900" r="4.100" fill="url(#mgg)" stroke="#b9dcf8" stroke-width=".6"/>
 <!-- green paint -->
 <path d="M453 10.500C453 9 454 8 455.500 8H465C471.500 8 477 13.200 477 20V29.500C477 31 476 32 474.500 32H455.500C454 32 453 31 453 29.500z" fill="#15782c"/>
 <path d="M453 12c1.500-2.500 4-3.800 7-4h-4.500c-1.500 0-2.500 1-2.500 2.500z" fill="#1e3fa0"/>
 <circle cx="466.200" cy="18.500" r="9.800" fill="#35b83a"/>
 <path d="M466.200 18.500L471.500 10.300A9.800 9.800 0 0 1 475.600 15.800z" fill="#c8e030"/>
 <path d="M466.200 18.500L475.600 15.800A9.800 9.800 0 0 1 475.700 21.300z" fill="#f0c030"/>
 <path d="M466.200 18.500L475.700 21.300A9.800 9.800 0 0 1 473 25.500z" fill="#ee6a4a"/>
 <path d="M473 25.500A9.800 9.800 0 0 0 475.700 21.300L477 22v6z" fill="#c8201c"/>
 <circle cx="465.200" cy="18.800" r="7.800" fill="url(#lmg)"/>
 <g stroke="#f2ffd0" stroke-width=".5" opacity=".8"><path d="M465.200 18.800L459 14M465.200 18.800L464 11.200M465.200 18.800L470.500 13M465.200 18.800L472.800 18M465.200 18.800L470.500 24.500M465.200 18.800L463 26.200M465.200 18.800L457.700 21"/></g>
 <path d="M454 17.800l15.500 7.600" stroke="#5a3418" stroke-width="1.700"/>
 <path d="M454.600 20.600l14.500 7.200" stroke="#d08820" stroke-width="1.600"/>
 <path d="M469.500 25.400l3.700 2.200" stroke="#9a9a9a" stroke-width="1.500"/><path d="M472.800 27.400l2.200 1.200" stroke="#f4ead0" stroke-width="1.600"/>
 <path d="M469.100 27.800l3 1.500" stroke="#9a9a9a" stroke-width="1.400"/><path d="M471.800 29.200l2 .9" stroke="#f4ead0" stroke-width="1.400"/>
 <!-- publisher -->
 <rect x="519" y="11" width="7" height="13.500" fill="#117865"/>
 <path d="M519.500 11.500h6v12.500h-2" fill="none" stroke="#fff" stroke-width="1"/>
 <rect x="523" y="12" width="2" height="11.500" fill="#fff"/>
 <rect x="515" y="13.500" width="8" height="14.500" fill="#117865"/>
 <path d="M516 14h6.500v13.500H516" fill="none" stroke="#fff" stroke-width="1"/>
 <path d="M516.500 17h4.500M516.500 22.500h5M516.500 25h5" stroke="#fff" stroke-width="1.100"/>
 <rect x="516.500" y="19" width="4.500" height="2" fill="#8ec5b9"/>
 <path d="M502.800 11.300l13.200-2.700v22.500l-13.200-2.600z" fill="#0b7261"/>
 <text x="509.500" y="24.200" font-family="Liberation Sans,sans-serif" font-weight="bold" font-size="11.500" fill="#fff" text-anchor="middle">P</text>
 <!-- medibang -->
 <defs><linearGradient id="mbg" x1="0" y1="0" x2="0" y2="1"><stop offset="0" stop-color="#fff"/><stop offset="1" stop-color="#ececec"/></linearGradient>
 <clipPath id="mbc"><circle cx="562.800" cy="20.600" r="7"/></clipPath></defs>
 <rect x="551" y="7.700" width="24" height="24.100" rx="4.500" fill="url(#mbg)"/>
 <g clip-path="url(#mbc)">
  <rect x="555" y="13" width="16" height="16" fill="#22d3e6"/>
  <path d="M555 13h8.500l-1.500 4.500c-2 2-4.500 3-7 2.500z" fill="#f2203e"/>
  <path d="M554 24c5 2.500 11 1.500 17-5v10h-17z" fill="#3fbe22"/>
  <path d="M567.500 15c2.500 2.500 3 7 1.500 10.500l2.500-1v-9z" fill="#e8e020"/>
 </g>
 <path d="M559.500 15.500c1.500-2.600 3.500-4 6-4.500-.3 1 .2 1.800 1 2.500-2.600 0-5 .6-7 2z" fill="#ff9a22"/>
 <!-- plug + battery -->
 <path d="M943.500 9.700v5M951.500 9.700v5" stroke="#fff" stroke-width="1.800"/>
 <path d="M941 14.500h13v5.500c0 3-2.500 5.500-5 6v3h-3v-3c-2.500-.5-5-3-5-6z" fill="#fff"/>
 <path d="M944 19.500l2.500 2.500 4.500-5" fill="none" stroke="#2a8fd8" stroke-width="1.800"/>
 <rect x="958" y="10.700" width="34.600" height="18.200" fill="#1db954" stroke="#fff" stroke-width="2"/>
 <rect x="993.600" y="15" width="3" height="9.500" fill="#fff"/>
 <text x="976.300" y="24.300" font-family="Liberation Sans,sans-serif" font-size="12.500" fill="#fff" text-anchor="middle">90%</text>
 <circle cx="989" cy="9" r="6" fill="#f4002e"/>
 <!-- people -->
 <g fill="none" stroke="#fff" stroke-width="1.200"><circle cx="1034" cy="14.600" r="2.500"/><path d="M1031.500 19c.8-.9 1.600-1.300 2.500-1.300 2 0 3.400 1.300 3.900 3.600"/><circle cx="1027.500" cy="19.200" r="2.700"/><path d="M1023 26.800c.4-3 2.100-4.700 4.500-4.700s4.100 1.700 4.500 4.700"/></g>
 <!-- chevron -->
 <path d="M1060.500 22.300l5.700-5.700 5.700 5.700" fill="none" stroke="#fff" stroke-width="1.300"/>
 <!-- battery small -->
 <g fill="none" stroke="#fff" stroke-width="1.100"><path d="M1083.100 14.200v3M1085.900 14.200v3"/><path d="M1082.300 17.300h4.400v1.800c0 1.200-1 2.100-2.200 2.100s-2.200-.9-2.200-2.100zM1084.500 21.200v3.700h2.500"/><rect x="1086.900" y="16.600" width="10.200" height="8.300"/></g>
 <rect x="1097.200" y="18.600" width="1.300" height="4.200" fill="#fff"/><rect x="1088" y="18.200" width="5.300" height="5.200" fill="#fff"/>
 <!-- wifi -->
 <g fill="none" stroke="#fff" stroke-width="1.300"><path d="M1109.400 25.600a10.200 10.200 0 0 1 10.200-10.200"/><path d="M1112.600 25.600a7 7 0 0 1 7-7"/><path d="M1115.800 25.600a3.800 3.800 0 0 1 3.800-3.800"/></g>
 <circle cx="1119.600" cy="25.300" r="1.500" fill="#fff"/>
 <!-- volume -->
 <path d="M1130.700 17.600h2.200l2.700-2.700v11.200l-2.700-2.700h-2.200z" fill="none" stroke="#fff" stroke-width="1.100"/>
 <path d="M1138.200 17.800a3.800 3.800 0 0 1 0 5.400" fill="none" stroke="#fff" stroke-width="1.100"/>
 <path d="M1140.700 15.600a6.800 6.800 0 0 1 0 9.800" fill="none" stroke="#b08f92" stroke-width="1.100"/>
 <path d="M1143.200 13.400a9.800 9.800 0 0 1 0 14.200" fill="none" stroke="#8a6468" stroke-width="1.100"/>
 <!-- pen -->
 <g fill="none" stroke="#fff"><path d="M1169.200 13.600c.6-1 1.600-1.300 2.500-.8s1.100 1.500.6 2.500l-6.200 10.600-2.700 2.300.2-3.600z" stroke-width="1.100"/><path d="M1167.300 15.600l-2 3.300" stroke-width="1.300" stroke-dasharray="1 .6"/>
 <path d="M1162.400 21.400c-2.900-.4-4.200 1.400-4.200 3 0 2.100 1.600 3.400 3.600 3.200" stroke-width="1.500"/>
 <path d="M1170.400 18.400c2.100-.4 3.300.6 3.300 1.600 0 1.200-1.400 1.800-3.100 1.500" stroke-width="1.400"/></g>
 <!-- IME box -->
 <rect x="1214.800" y="12.800" width="14.300" height="14.500" fill="#fff"/>
 <path d="M1219.600 15.700l-.8 2.600h6.200c0 3-.3 4.400-.8 5-.4.400-1.200.4-2.600.2" fill="none" stroke="#3c0f14" stroke-width="1"/>
 <!-- notifications -->
 <path d="M1325 12h16.100v13.100h-7.600l-3 3v-3h-5.500z" fill="#fff"/>
 <path d="M1328 15.400h10.100M1328 18.300h10.100M1328 21.300h7" stroke="#3c0f14" stroke-width="1"/>
 <circle cx="1340.600" cy="27.700" r="7.700" fill="#8c1f2c" stroke="#b86570" stroke-width=".9"/>
 <text x="1340.600" y="31.400" font-family="Liberation Sans,sans-serif" font-size="11.500" fill="#fff" text-anchor="middle">3</text>
 <rect x="1361" y="0" width="1" height="40" fill="#7a5a5e"/>
</svg>
<div class="t w c" style="left:1193.500px;top:740px;height:18px;line-height:18px;font-size:13.500px">中</div>
<div class="t w" id="ck1" style="left:1248.500px;top:731px;font-size:12px;letter-spacing:-0.100px">下午 01:14</div>
<div class="t w" id="ck2" style="left:1247.500px;top:749px;font-size:12px;letter-spacing:0.550px">2018/8/15</div>
</body>
</html>
